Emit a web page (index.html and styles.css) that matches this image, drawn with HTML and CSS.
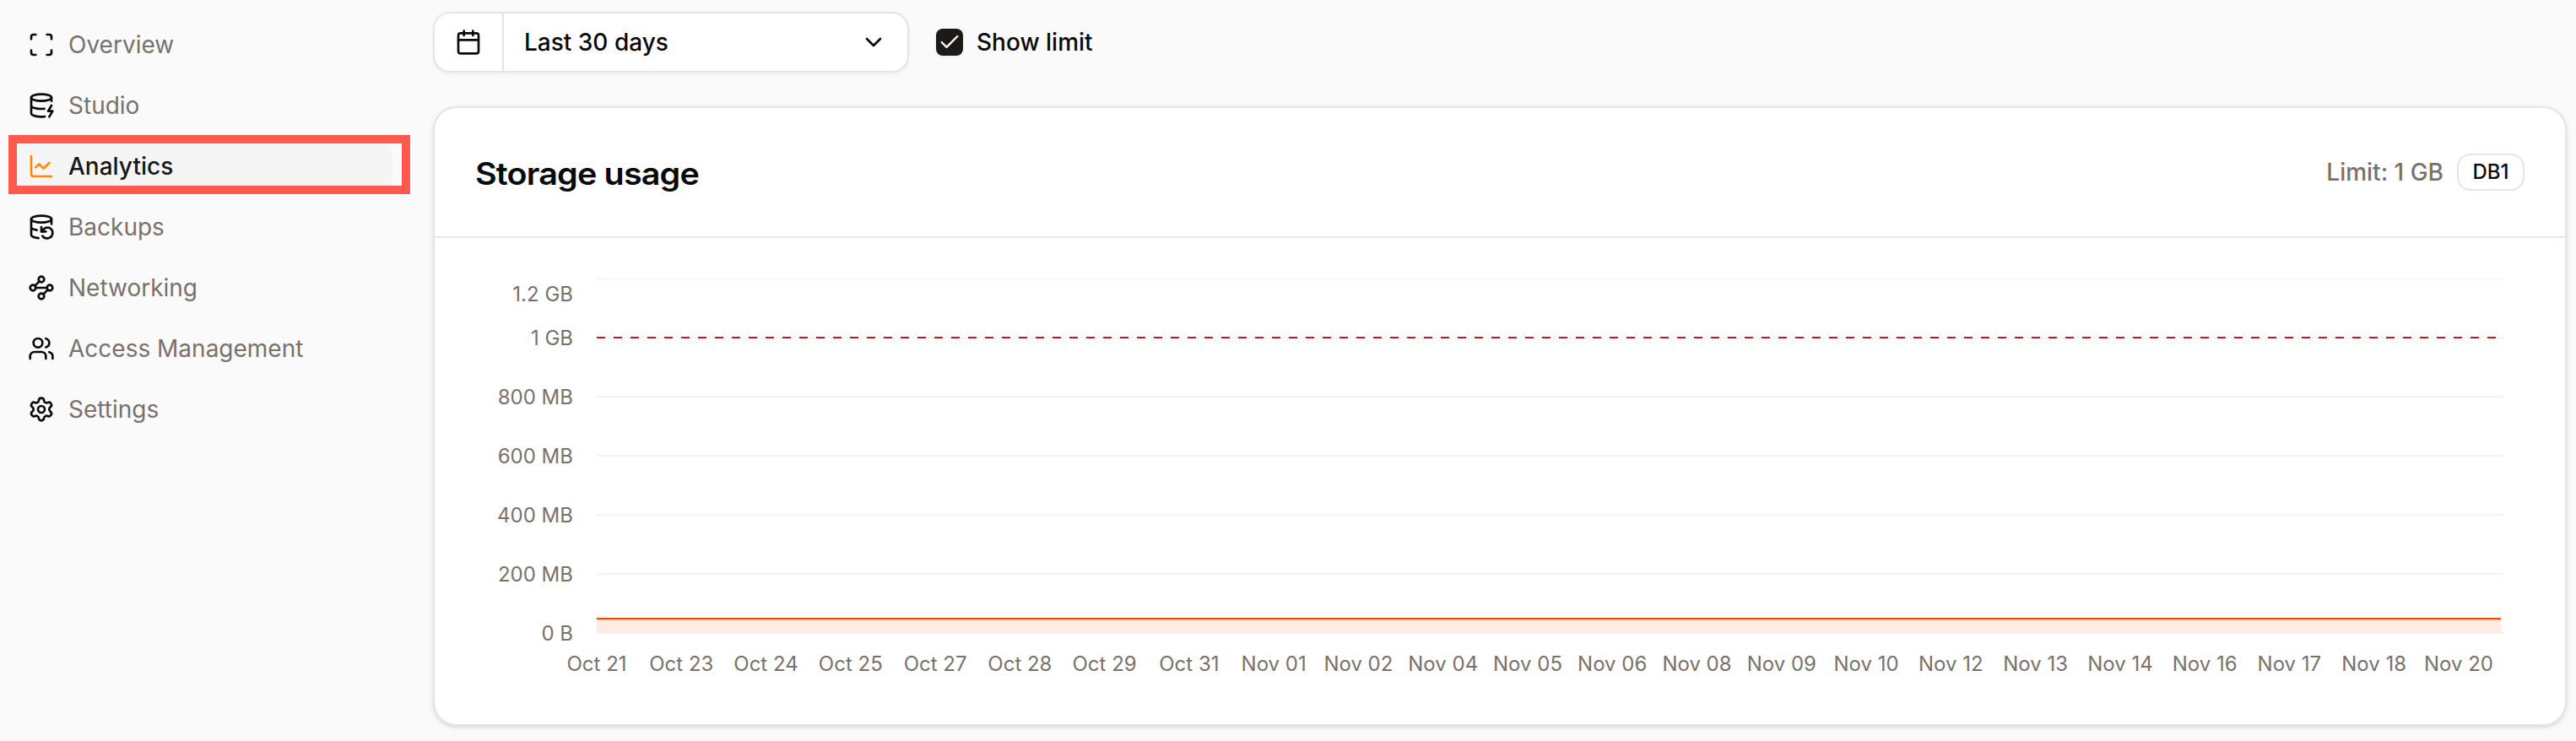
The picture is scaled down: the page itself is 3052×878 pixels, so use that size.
FILE: index.html
```html
<!DOCTYPE html>
<html lang="en">
<head>
<meta charset="utf-8">
<title>Analytics</title>
<link rel="stylesheet" href="styles.css">
</head>
<body>
<div class="app">
  <nav class="sidebar">
    <a class="nav-item"><svg class="icon" viewBox="0 0 24 24"><path d="M3 7V5a2 2 0 0 1 2-2h2M17 3h2a2 2 0 0 1 2 2v2M21 17v2a2 2 0 0 1-2 2h-2M7 21H5a2 2 0 0 1-2-2v-2"/></svg><span>Overview</span></a>
    <a class="nav-item"><svg class="icon" viewBox="0 0 24 24"><ellipse cx="12" cy="5" rx="9" ry="3"/><path d="M3 5V19A9 3 0 0 0 15 21.84M21 5V8M21 12L18 17H22L19 22M3 12A9 3 0 0 0 14.59 14.87"/></svg><span>Studio</span></a>
    <a class="nav-item active"><svg class="icon" viewBox="0 0 24 24"><path d="M3 3v16a2 2 0 0 0 2 2h16"/><path d="m19 9-5 5-4-4-3 3"/></svg><span>Analytics</span><i class="highlight"></i></a>
    <a class="nav-item"><svg class="icon" viewBox="0 0 24 24"><ellipse cx="12" cy="5" rx="9" ry="3"/><path d="M3 12a9 3 0 0 0 5 2.69M21 9.3V5M3 5v14a9 3 0 0 0 6.47 2.88M12 12v4h4"/><path d="M13 20a5 5 0 0 0 9-3 4.5 4.5 0 0 0-4.5-4.5c-1.33 0-2.54.54-3.41 1.41L12 16"/></svg><span>Backups</span></a>
    <a class="nav-item"><svg class="icon" viewBox="0 0 24 24"><circle cx="12" cy="4.5" r="2.5"/><path d="m10.2 6.3-3.9 3.9"/><circle cx="4.5" cy="12" r="2.5"/><path d="M7 12h10"/><circle cx="19.5" cy="12" r="2.5"/><path d="m13.8 17.7 3.9-3.9"/><circle cx="12" cy="19.5" r="2.5"/></svg><span>Networking</span></a>
    <a class="nav-item"><svg class="icon" viewBox="0 0 24 24"><path d="M16 21v-2a4 4 0 0 0-4-4H6a4 4 0 0 0-4 4v2"/><circle cx="9" cy="7" r="4"/><path d="M22 21v-2a4 4 0 0 0-3-3.87M16 3.13a4 4 0 0 1 0 7.75"/></svg><span>Access Management</span></a>
    <a class="nav-item"><svg class="icon" viewBox="0 0 24 24"><path d="M9.671 4.136a2.34 2.34 0 0 1 4.659 0 2.34 2.34 0 0 0 3.319 1.915 2.34 2.34 0 0 1 2.33 4.033 2.34 2.34 0 0 0 0 3.831 2.34 2.34 0 0 1-2.33 4.033 2.34 2.34 0 0 0-3.319 1.915 2.34 2.34 0 0 1-4.659 0 2.34 2.34 0 0 0-3.32-1.915 2.34 2.34 0 0 1-2.33-4.033 2.34 2.34 0 0 0 0-3.831A2.34 2.34 0 0 1 6.35 6.051a2.34 2.34 0 0 0 3.319-1.915"/><circle cx="12" cy="12" r="3"/></svg><span>Settings</span></a>
  </nav>
  <main class="main">
    <div class="toolbar">
      <div class="range">
        <div class="range-icon"><svg class="icon" viewBox="0 0 24 24"><path d="M8 2v4M16 2v4M3 10h18"/><rect x="3" y="4" width="18" height="18" rx="2"/></svg></div>
        <div class="range-value"><span>Last 30 days</span><svg class="icon" viewBox="0 0 24 24"><path d="m6 9 6 6 6-6"/></svg></div>
      </div>
      <label class="check"><span class="box"><svg viewBox="0 0 24 24"><path d="M20 6 9 17l-5-5"/></svg></span><span>Show limit</span></label>
    </div>
    <section class="card">
      <header class="card-head">
        <h2>Storage usage</h2>
        <div class="limit"><span>Limit: 1 GB</span><span class="badge">DB1</span></div>
      </header>
      <svg class="chart" width="2524" height="576" viewBox="515 282 2524 576">
        <g class="grid">
          <path d="M707 330.5H2967" stroke-width="1"/>
          <path d="M707 400H2967M707 470H2967M707 540H2967M707 610H2967M707 680H2967M707 750H2967" stroke-width="2"/>
        </g>
        <path class="limit-line" d="M707 400H2967"/>
        <rect class="area" x="707" y="733" width="2256" height="17"/>
        <path class="usage" d="M707 733.1H2963"/>
        <g class="ylabels">
          <text x="679" y="357">1.2 GB</text><text x="679" y="409">1 GB</text><text x="679" y="479">800 MB</text><text x="679" y="549">600 MB</text><text x="679" y="619">400 MB</text><text x="679" y="689">200 MB</text><text x="679" y="759">0 B</text>
        </g>
        <g class="xlabels">
          <text x="707" y="795">Oct 21</text><text x="807.3" y="795">Oct 23</text><text x="907.5" y="795">Oct 24</text><text x="1007.8" y="795">Oct 25</text><text x="1108.1" y="795">Oct 27</text><text x="1208.4" y="795">Oct 28</text><text x="1308.6" y="795">Oct 29</text><text x="1408.9" y="795">Oct 31</text><text x="1509.2" y="795">Nov 01</text><text x="1609.4" y="795">Nov 02</text><text x="1709.7" y="795">Nov 04</text><text x="1810" y="795">Nov 05</text><text x="1910.2" y="795">Nov 06</text><text x="2010.5" y="795">Nov 08</text><text x="2110.8" y="795">Nov 09</text><text x="2211.1" y="795">Nov 10</text><text x="2311.3" y="795">Nov 12</text><text x="2411.6" y="795">Nov 13</text><text x="2511.9" y="795">Nov 14</text><text x="2612.1" y="795">Nov 16</text><text x="2712.4" y="795">Nov 17</text><text x="2812.7" y="795">Nov 18</text><text x="2913" y="795">Nov 20</text>
        </g>
      </svg>
    </section>
  </main>
</div>
</body>
</html>
```
FILE: styles.css
```css
* { box-sizing: border-box; }
body {
  margin: 0;
  background: #fafafa;
  color: #0a0a0a;
  font: 400 28px/40px Inter, "Liberation Sans", sans-serif;
}
.app { display: flex; height: 878px; overflow: hidden; }
.icon {
  width: 32px; height: 32px; flex: none;
  fill: none; stroke: #0a0a0a; stroke-width: 2;
  stroke-linecap: round; stroke-linejoin: round;
}
.sidebar {
  width: 513px; flex: none;
  padding: 21px 48px 0 17px;
  display: flex; flex-direction: column; gap: 8px;
}
.nav-item {
  position: relative;
  display: flex; align-items: center; gap: 16px;
  height: 64px; padding: 0 16px; border-radius: 16px;
  color: #79716b;
}
.nav-item.active { background: #f5f5f5; color: #171717; font-weight: 500; }
.nav-item.active .icon { stroke: #ff8904; }
.highlight {
  position: absolute; left: -7px; top: -5px;
  width: 476px; height: 70px;
  border: 10px solid #ff5a4d;
}
.main { flex: none; width: 2528px; padding-top: 14px; }
.toolbar { display: flex; align-items: center; gap: 32px; font-weight: 500; }
.range {
  display: flex; width: 564px; height: 72px;
  background: #fff; border: 2px solid #e5e5e5; border-radius: 20px;
  box-shadow: 0 2px 4px rgba(0,0,0,.05);
}
.range-icon { width: 82px; padding-left: 24px; border-right: 2px solid #e5e5e5; display: flex; align-items: center; }
.range-value { flex: 1; display: flex; align-items: center; justify-content: space-between; padding: 0 24px; }
.check { display: flex; align-items: center; gap: 16px; }
.box {
  width: 32px; height: 32px; border-radius: 8px; background: #1c1917;
  display: flex; align-items: center; justify-content: center;
  box-shadow: 0 2px 4px rgba(0,0,0,.05);
}
.box svg { width: 28px; height: 28px; fill: none; stroke: #fff; stroke-width: 2; stroke-linecap: round; stroke-linejoin: round; }
.card {
  margin-top: 40px; height: 734px;
  background: #fff; border: 2px solid #e5e5e5; border-radius: 28px;
  box-shadow: 0 2px 6px rgba(0,0,0,.1), 0 2px 4px -2px rgba(0,0,0,.1);
}
.card-head {
  height: 154px; padding: 0 48px;
  border-bottom: 2px solid #e5e5e5;
  display: flex; align-items: center; justify-content: space-between;
}
h2 {
  margin: 0; padding-top: 3px;
  font-size: 37px; font-weight: 600; letter-spacing: -0.8px;
  transform: scaleX(1.068); transform-origin: left;
}
.limit { display: flex; align-items: center; gap: 16px; color: #79716b; font-weight: 500; }
.badge {
  width: 80px; height: 44px; border: 2px solid #e5e5e5; border-radius: 16px;
  color: #0a0a0a; font-size: 24px; line-height: 40px; text-align: center;
}
.chart { display: block; font-size: 24px; }
.chart text { fill: #79716b; }
.grid { stroke: #f3f3f3; }
.limit-line { stroke: #b91c1c; stroke-width: 2; stroke-dasharray: 10 10; }
.area { fill: #ffebe2; }
.usage { stroke: #f54900; stroke-width: 2.4; }
.ylabels { text-anchor: end; }
.xlabels { text-anchor: middle; }
```
